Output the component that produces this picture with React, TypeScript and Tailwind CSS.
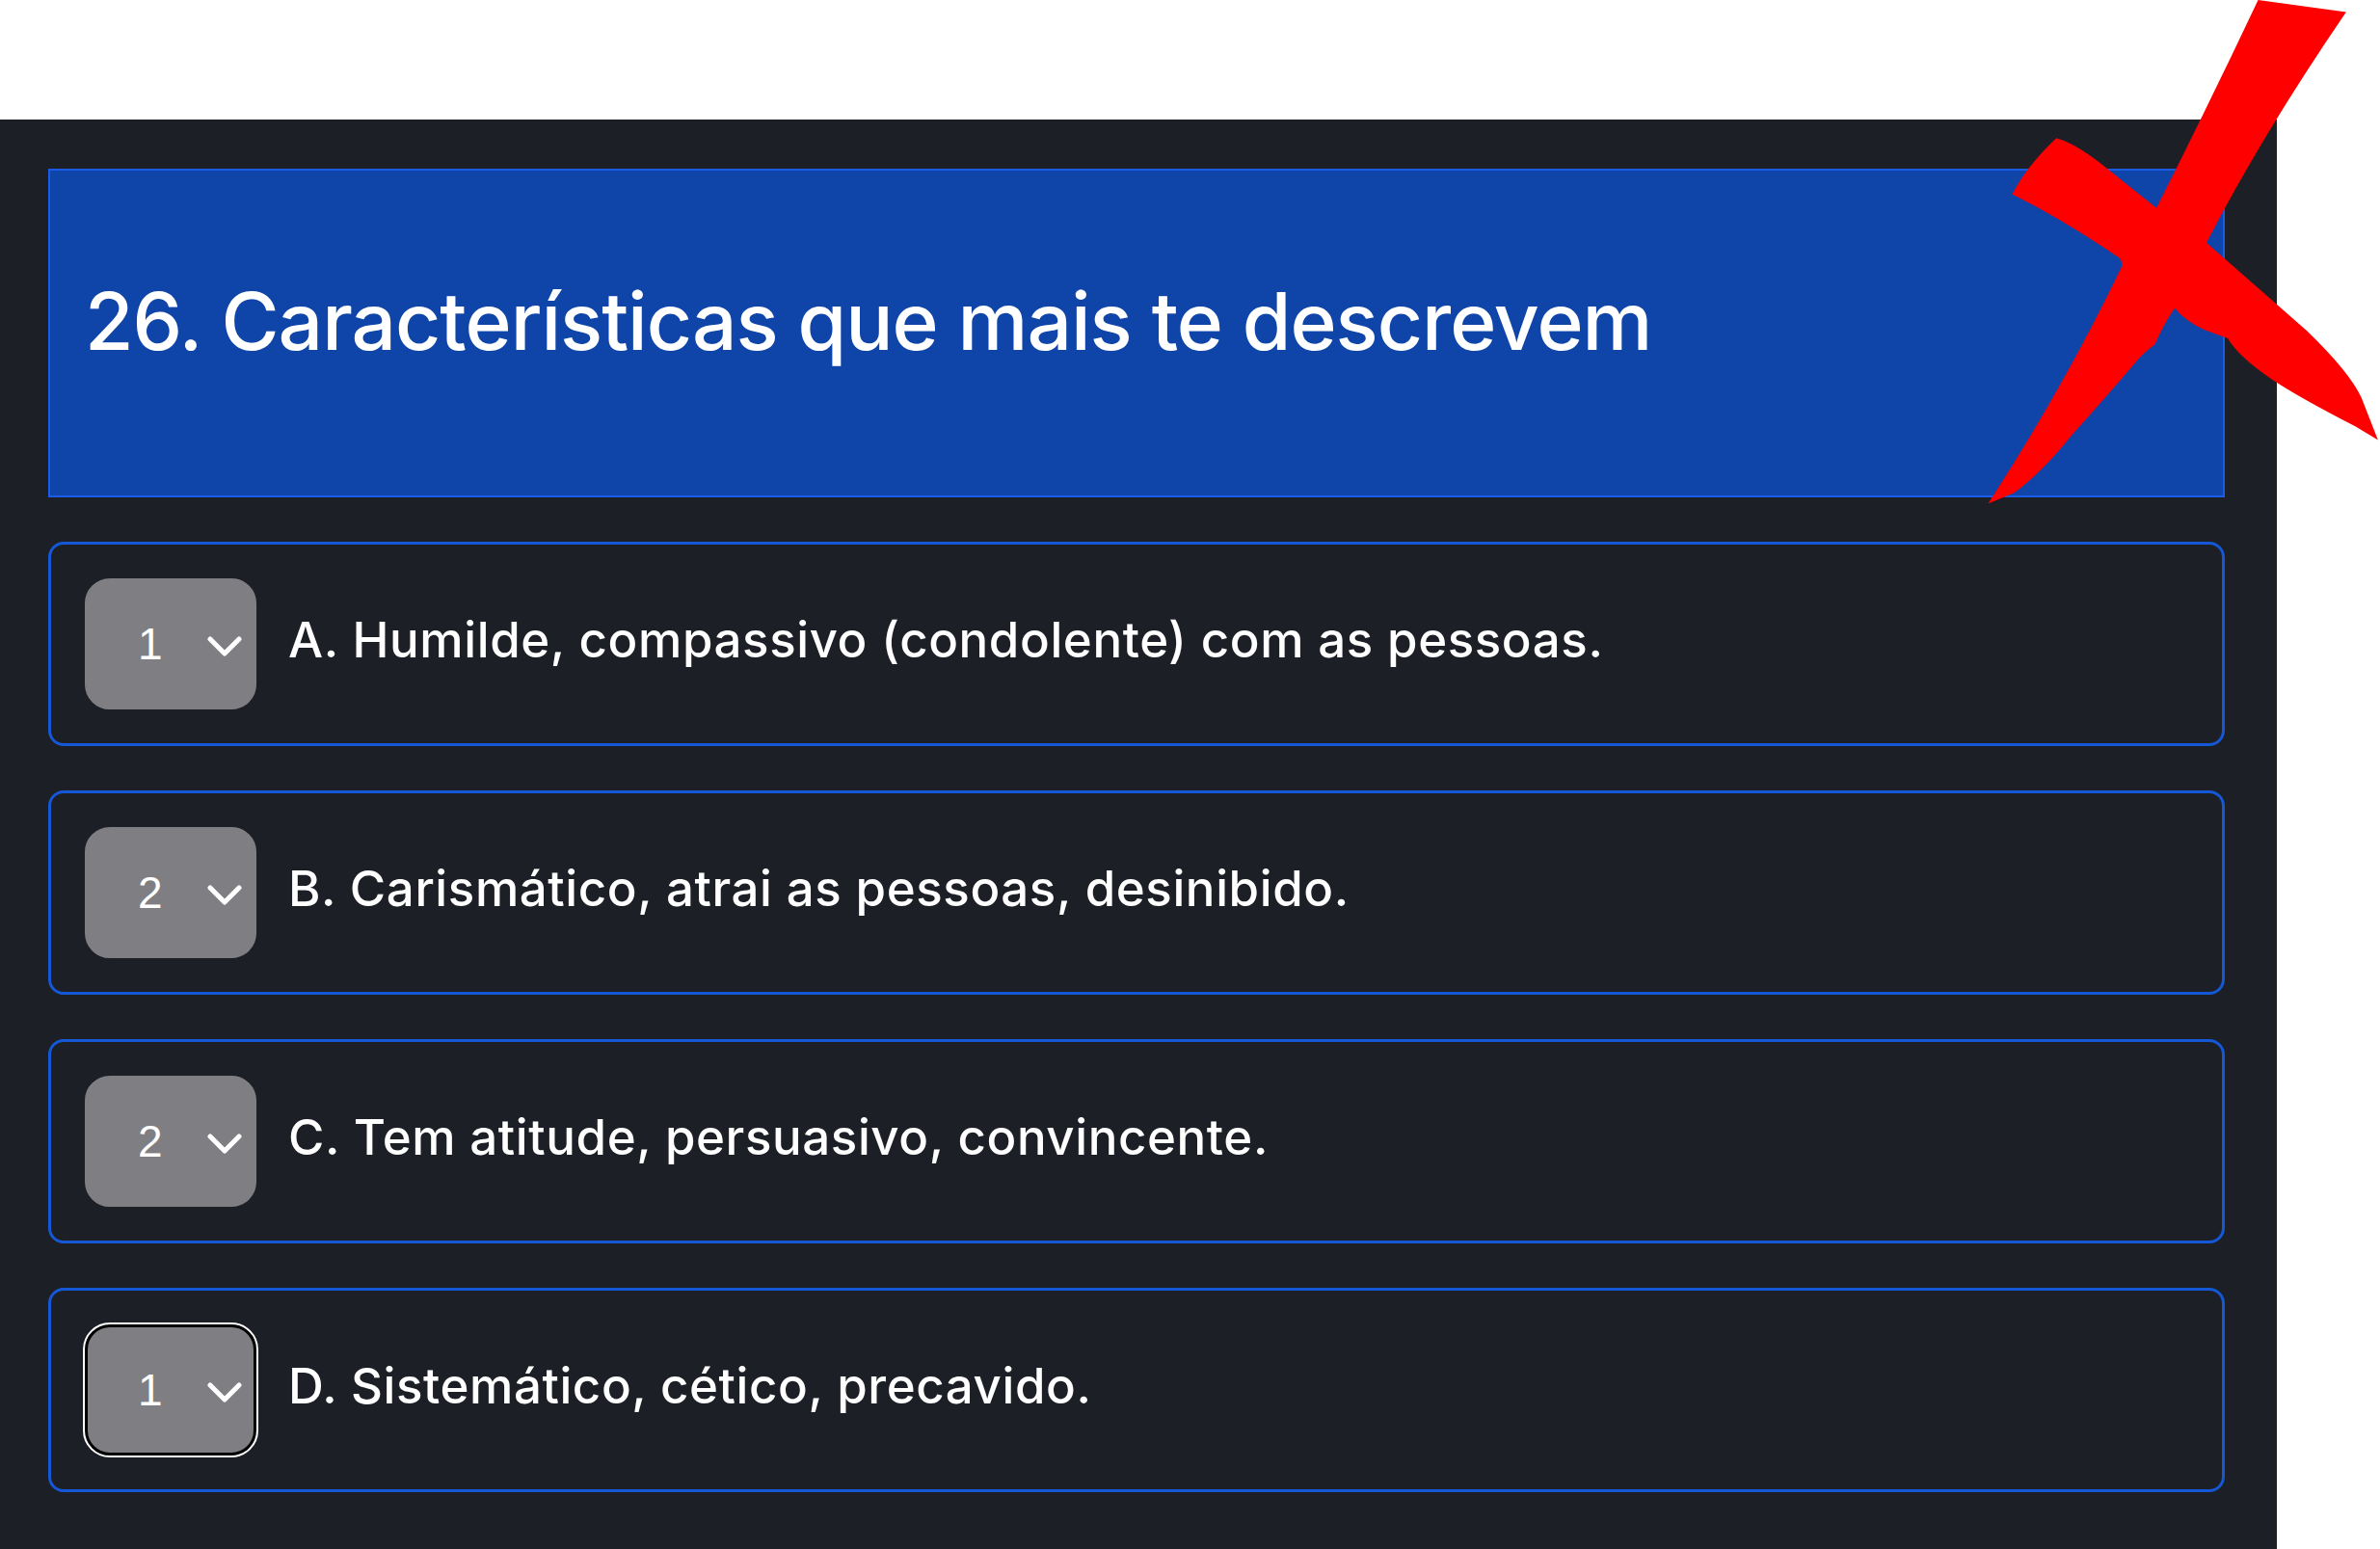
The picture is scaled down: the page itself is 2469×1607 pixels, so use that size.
type Item = { value: string; label: string; focused?: boolean };

const items: Item[] = [
  { value: '1', label: 'A. Humilde, compassivo (condolente) com as pessoas.' },
  { value: '2', label: 'B. Carismático, atrai as pessoas, desinibido.' },
  { value: '2', label: 'C. Tem atitude, persuasivo, convincente.' },
  { value: '1', label: 'D. Sistemático, cético, precavido.', focused: true },
];

function RankSelect({ value, focused }: { value: string; focused?: boolean }) {
  return (
    <div
      className={
        focused
          ? 'flex h-[136px] w-[178px] shrink-0 items-center justify-between rounded-[26px] border-[3px] border-black bg-[#7f7f83] pl-[52px] pr-[12px] outline-2 outline-offset-0 outline-white'
          : 'flex h-[136px] w-[178px] shrink-0 items-center justify-between rounded-[26px] border-[3px] border-[#7f7f83] bg-[#7f7f83] pl-[52px] pr-[12px]'
      }
    >
      <span className="font-['Liberation_Sans',sans-serif] text-[46px] leading-none text-white">{value}</span>
      <svg width={36} height={22} viewBox="0 0 36 22" className="mt-[6px]">
        <polyline points="3,3 18,18 33,3" fill="none" stroke="#fff" strokeWidth={5} strokeLinecap="round" strokeLinejoin="round" />
      </svg>
    </div>
  );
}

export default function App() {
  return (
    <main className="relative min-h-screen w-full overflow-hidden bg-white pt-[124px]">
      <div className="flex min-h-[1483px] w-[2362px] flex-col gap-[46px] bg-[#1c1f26] pl-[50px] pr-[54px] pt-[51px] pb-[60px]">
        {/* Question header */}
        <div className="flex h-[341px] items-center border-2 border-[#1a5ce6] bg-[#0f44a8] pb-[24px] pl-[36px]">
          <h1 className="font-['Inter',sans-serif] text-[82px] font-medium tracking-[-1px] text-white">
            26. Características que mais te descrevem
          </h1>
        </div>

        {/* Options */}
        {items.map((item, i) => (
          <div
            key={i}
            className="flex h-[212px] items-center gap-[33px] rounded-[16px] border-[3px] border-[#1558d6] px-[35px]"
          >
            <RankSelect value={item.value} focused={item.focused} />
            <span className="pb-[8px] font-['Inter',sans-serif] text-[51px] font-medium tracking-[0.6px] text-white">
              {item.label}
            </span>
          </div>
        ))}
      </div>

      {/* Red X annotation drawn over the page */}
      <svg
        className="pointer-events-none absolute left-0 top-0"
        width={2469}
        height={1607}
        viewBox="0 0 1568 1021"
      >
        <path
          fill="#ff0000"
          d="M1488 0 L1546 8 Q1490 90 1454 160 L1520 218 Q1548 245 1556 262 L1567 290 L1552 281 Q1515 262 1497 250 Q1475 235 1468 223 L1454 218 Q1440 212 1433 203 Q1425 215 1420 227 Q1412 233 1408 238 Q1385 265 1365 287 Q1345 312 1327 325 L1310 332 Q1360 255 1398 176 Q1399 171 1395 169 Q1360 145 1326 128 Q1335 110 1355 91 Q1366 94 1382 106 L1421 137 Q1455 70 1488 0 Z"
        />
      </svg>
    </main>
  );
}
